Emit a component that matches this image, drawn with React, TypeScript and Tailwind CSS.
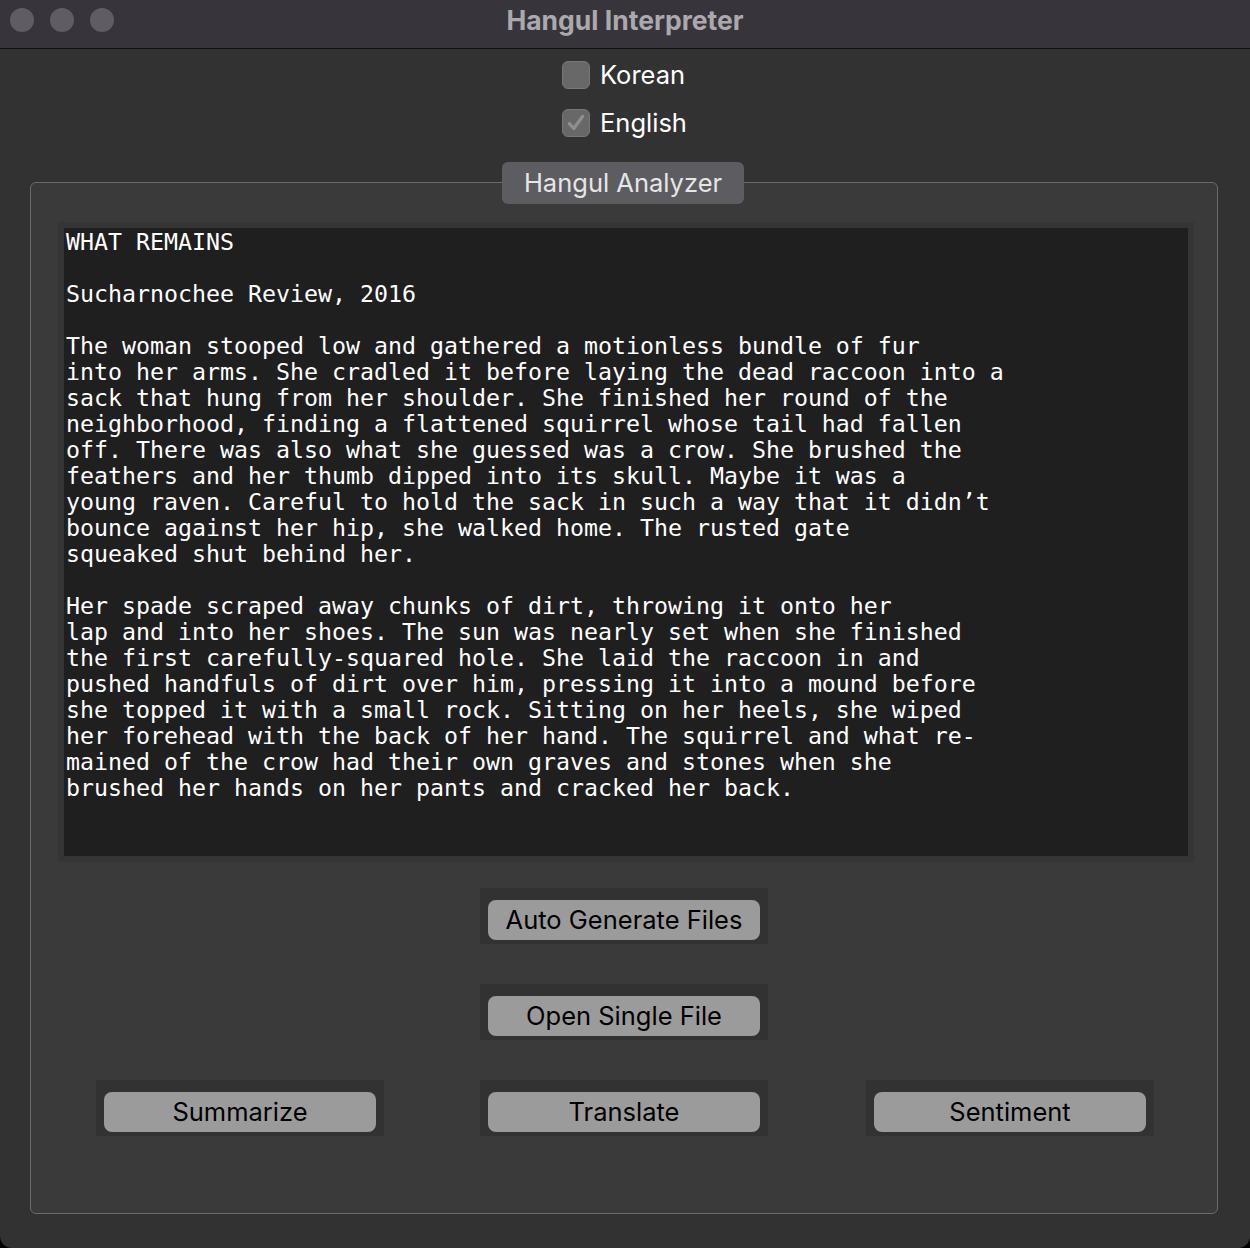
import React from "react";

const poem = `WHAT REMAINS

Sucharnochee Review, 2016

The woman stooped low and gathered a motionless bundle of fur
into her arms. She cradled it before laying the dead raccoon into a
sack that hung from her shoulder. She finished her round of the
neighborhood, finding a flattened squirrel whose tail had fallen
off. There was also what she guessed was a crow. She brushed the
feathers and her thumb dipped into its skull. Maybe it was a
young raven. Careful to hold the sack in such a way that it didn’t
bounce against her hip, she walked home. The rusted gate
squeaked shut behind her.

Her spade scraped away chunks of dirt, throwing it onto her
lap and into her shoes. The sun was nearly set when she finished
the first carefully-squared hole. She laid the raccoon in and
pushed handfuls of dirt over him, pressing it into a mound before
she topped it with a small rock. Sitting on her heels, she wiped
her forehead with the back of her hand. The squirrel and what re-
mained of the crow had their own graves and stones when she
brushed her hands on her pants and cracked her back.`;

const sans = "font-['Inter','Liberation_Sans',sans-serif]";

function Check({ label, checked }: { label: string; checked?: boolean }) {
  return (
    <div className="flex items-center h-[28px] gap-[10px]">
      <div className="w-[28px] h-[28px] rounded-[6px] bg-[#686868] border border-[#777] flex items-center justify-center">
        {checked && (
          <svg width="22" height="22" viewBox="0 0 20 20" fill="none">
            <path d="M4 10.5l4 4.5 8-11" stroke="#8f8f8f" strokeWidth="3" strokeLinecap="round" strokeLinejoin="round" />
          </svg>
        )}
      </div>
      <span className={`${sans} text-[25.5px] text-white`}>{label}</span>
    </div>
  );
}

function Btn({ label }: { label: string }) {
  return (
    <div className="w-[288px] h-[56px] bg-[#323232] pt-[12px] px-[8px] pb-[4px]">
      <button className={`w-full h-[40px] rounded-[8px] bg-[#9b9b9b] text-black text-[25.5px] leading-none pb-[1px] ${sans}`}>
        {label}
      </button>
    </div>
  );
}

export default function App() {
  return (
    <div className="w-[1250px] h-[1248px] bg-black">
      <div className="w-full h-full bg-[#323232] rounded-b-[12px] overflow-hidden flex flex-col">
        {/* Title bar */}
        <div className="relative h-[49px] bg-[#37353b] border-b border-[#111] flex items-center shrink-0">
          <div className="flex gap-[16px] pl-[10px] pb-[9px]">
            <div className="w-[24px] h-[24px] rounded-full bg-[#5f5c63]" />
            <div className="w-[24px] h-[24px] rounded-full bg-[#5f5c63]" />
            <div className="w-[24px] h-[24px] rounded-full bg-[#5f5c63]" />
          </div>
          <div className={`absolute left-0 right-0 top-[1px] text-center text-[26.5px] font-bold text-[#aba9ae] ${sans}`}>
            Hangul Interpreter
          </div>
        </div>

        {/* Language options */}
        <div className="flex flex-col items-center pt-[12px] pl-[24px]">
          <div className="flex flex-col gap-[20px] w-[150px]">
            <Check label="Korean" />
            <Check label="English" checked />
          </div>
        </div>

        {/* Group box */}
        <div className="relative ml-[30px] mt-[45px] w-[1188px] h-[1032px] rounded-[6px] border border-[#6b6b6b] bg-[#3a3a3a]">
          <div className={`absolute left-[471px] -top-[21px] w-[242px] h-[42px] rounded-[6px] bg-[#5d5c61] text-[#e6e6e6] text-[25.5px] flex items-center justify-center ${sans}`}>
            Hangul Analyzer
          </div>

          <div className="ml-[27px] mt-[39px] w-[1136px] h-[640px] bg-[#353535] p-[6px]">
            <div className="w-full h-full bg-[#1f1f1f] pl-[2px] pt-[1px]">
              <pre className="font-['DejaVu_Sans_Mono','Liberation_Mono',monospace] text-[23.26px] leading-[26px] text-white whitespace-pre">
                {poem}
              </pre>
            </div>
          </div>

          <div className="flex flex-col items-center">
            <div className="mt-[26px]">
              <Btn label="Auto Generate Files" />
            </div>
            <div className="mt-[40px]">
              <Btn label="Open Single File" />
            </div>
          </div>

          <div className="flex mt-[40px] pl-[65px] gap-[96px]">
            <Btn label="Summarize" />
            <Btn label="Translate" />
            <div className="ml-[2px]">
              <Btn label="Sentiment" />
            </div>
          </div>
        </div>
      </div>
    </div>
  );
}
